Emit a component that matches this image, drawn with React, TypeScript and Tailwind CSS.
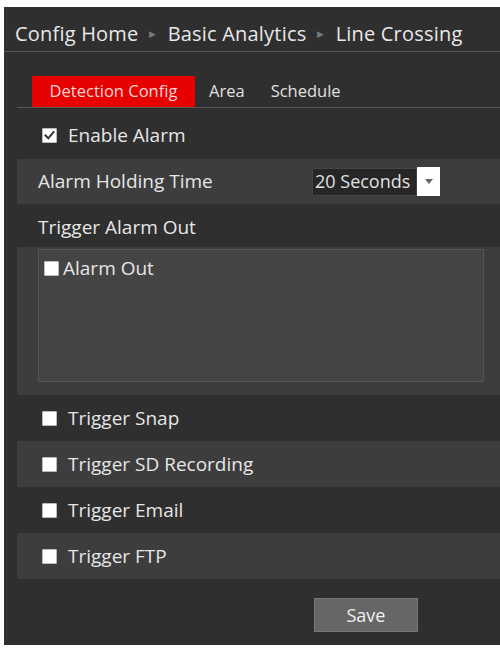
const font = "font-['Open_Sans','Noto_Sans',sans-serif]";

function Box({ checked = false }: { checked?: boolean }) {
  return (
    <span className="flex h-[15px] w-[15px] shrink-0 items-center justify-center rounded-[1px] border border-[#bbb] bg-white">
      {checked && (
        <svg width="11" height="11" viewBox="0 0 11 11" fill="none">
          <path d="M1.5 5.5L4.3 8.3L9.5 2.2" stroke="#333" strokeWidth="2" strokeLinecap="square" />
        </svg>
      )}
    </span>
  );
}

function CheckRow({ label, shade, checked }: { label: string; shade?: boolean; checked?: boolean }) {
  return (
    <div className={`flex h-[46px] items-center gap-[11px] pl-[25px] ${shade ? "bg-[#3d3d3d]" : ""}`}>
      <Box checked={checked} />
      <span className="text-[19px] text-[#e6e6e6]">{label}</span>
    </div>
  );
}

export default function App() {
  return (
    <div className={`min-h-[648px] bg-white pb-[3px] pl-[4px] pt-[7px] ${font}`}>
      <div className="flex h-[638px] flex-col bg-[#2f2f2f]">
        {/* breadcrumb */}
        <div className="flex h-[45px] items-center gap-[11px] border-b border-[#555] pl-[11px] pt-[9px] text-[20px] tracking-[0.2px] text-[#e8e8e8]">
          <span>Config Home</span>
          <span className="text-[9px] text-[#777]">▶</span>
          <span>Basic Analytics</span>
          <span className="text-[9px] text-[#777]">▶</span>
          <span>Line Crossing</span>
        </div>

        <div className="flex flex-col pl-[13px]">
          {/* tabs */}
          <div className="mt-[24px] flex h-[32px] items-stretch border-b border-[#555] text-[16.5px]">
            <div className="ml-[15px] flex w-[163px] items-center justify-center bg-[#e60000] text-[#ffd6d6]">
              Detection Config
            </div>
            <div className="ml-[14px] flex items-center text-[#e0e0e0]">Area</div>
            <div className="ml-[26px] flex items-center text-[#e0e0e0]">Schedule</div>
          </div>

          <div className="flex h-[51px] items-center gap-[11px] pl-[25px] pt-[4px]">
            <Box checked />
            <span className="text-[19px] text-[#e6e6e6]">Enable Alarm</span>
          </div>

          <div className="flex h-[45px] items-center bg-[#3d3d3d] pl-[21px]">
            <span className="w-[274px] text-[19px] text-[#e6e6e6]">Alarm Holding Time</span>
            <div className="flex items-center">
              <div className="flex h-[28px] w-[105px] items-center overflow-hidden whitespace-nowrap border border-[#444] bg-[#262626] pl-[2px] text-[18px] text-[#e0e0e0]">
                20 Seconds
              </div>
              <div className="flex h-[29px] w-[23px] items-center justify-center bg-white">
                <svg width="8" height="5" viewBox="0 0 8 5">
                  <path d="M0 0H8L4 5Z" fill="#666" />
                </svg>
              </div>
            </div>
          </div>

          <div className="flex h-[43px] items-center pl-[21px] pt-[3px] text-[19px] text-[#e6e6e6]">Trigger Alarm Out</div>

          <div className="flex h-[148px] flex-col bg-[#3d3d3d] pb-[13px] pl-[21px] pr-[16px] pt-[2px]">
            <div className="flex-1 border border-[#555] bg-[#444] pl-[5px] pt-[8px]">
              <div className="flex items-center gap-[4px]">
                <Box />
                <span className="text-[19px] leading-[20px] text-[#e6e6e6]">Alarm Out</span>
              </div>
            </div>
          </div>

          <CheckRow label="Trigger Snap" />
          <CheckRow label="Trigger SD Recording" shade />
          <CheckRow label="Trigger Email" />
          <CheckRow label="Trigger FTP" shade />

          <div className="mt-[19px] flex pl-[297px]">
            <button className="h-[34px] w-[104px] border border-[#777] bg-[#666] text-[18px] text-[#f0f0f0]">Save</button>
          </div>
        </div>
      </div>
    </div>
  );
}
